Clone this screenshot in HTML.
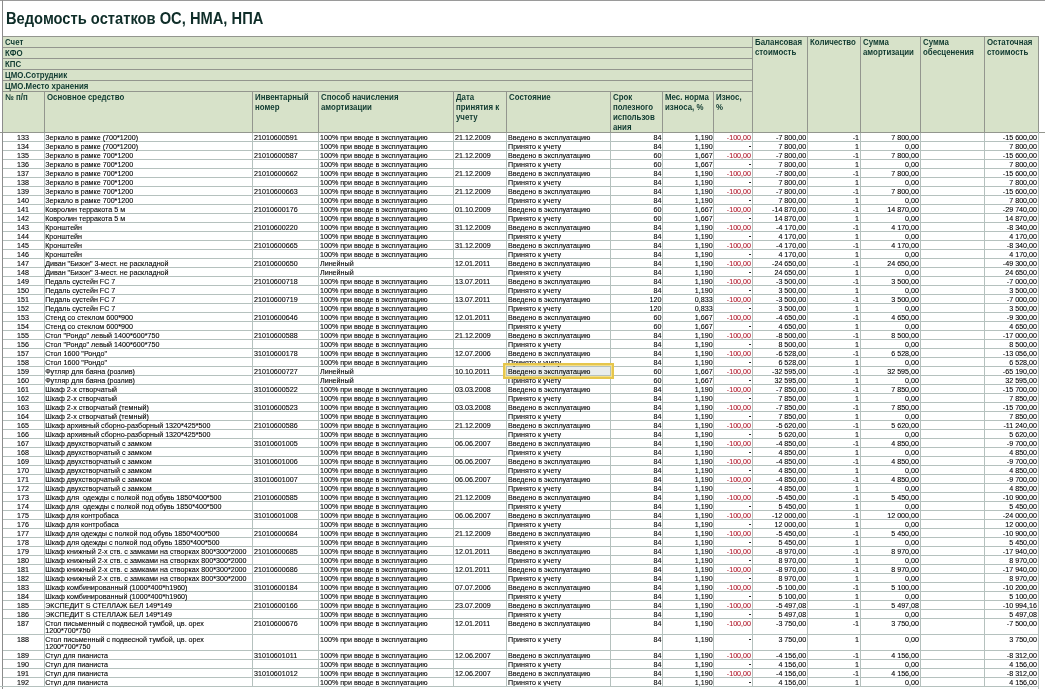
<!DOCTYPE html><html><head><meta charset="utf-8"><style>
html,body{margin:0;padding:0;background:#fff;}
body{will-change:transform;}
body{width:1045px;height:691px;overflow:hidden;position:relative;font-family:"Liberation Sans",sans-serif;}
div{position:absolute;}
.hl{height:1px;background:#93968e;}
.vl{width:1px;background:#93968e;}
.rl{height:1px;background:#b5c1be;}
.rv{width:1px;background:#b5c1be;}
.h{font-weight:bold;font-size:8.6px;line-height:10px;color:#0f3a30;white-space:nowrap;transform:scaleX(0.915);transform-origin:0 0;}
.d{font-size:7.15px;line-height:7px;color:#000;white-space:nowrap;-webkit-text-stroke:0.1px currentColor;}
.r{text-align:right;}
.c{text-align:center;}
.red{color:#b01a2c;}

</style></head><body>
<div class="hl" style="left:0;top:0;width:1045px;background:#9a9a9a"></div>
<div style="left:6px;top:8px;font-weight:bold;font-size:15px;line-height:20px;color:#0e2d28;white-space:nowrap;transform:scale(0.98,1.04);transform-origin:0 0">Ведомость остатков ОС, НМА, НПА</div>
<div style="left:2px;top:36px;width:1036px;height:96px;background:#d7e2c9"></div>
<div class="hl" style="left:2px;top:36px;width:1036px"></div>
<div class="hl" style="left:2px;top:47px;width:750px"></div>
<div class="hl" style="left:2px;top:58px;width:750px"></div>
<div class="hl" style="left:2px;top:69px;width:750px"></div>
<div class="hl" style="left:2px;top:80px;width:750px"></div>
<div class="hl" style="left:2px;top:91px;width:750px"></div>
<div class="hl" style="left:0;top:132px;width:1045px"></div>
<div class="vl" style="left:2px;top:36px;height:96px"></div>
<div class="vl" style="left:44px;top:91px;height:41px"></div>
<div class="vl" style="left:252px;top:91px;height:41px"></div>
<div class="vl" style="left:318px;top:91px;height:41px"></div>
<div class="vl" style="left:453px;top:91px;height:41px"></div>
<div class="vl" style="left:506px;top:91px;height:41px"></div>
<div class="vl" style="left:610px;top:91px;height:41px"></div>
<div class="vl" style="left:662px;top:91px;height:41px"></div>
<div class="vl" style="left:713px;top:91px;height:41px"></div>
<div class="vl" style="left:752px;top:36px;height:96px"></div>
<div class="vl" style="left:807px;top:36px;height:96px"></div>
<div class="vl" style="left:860px;top:36px;height:96px"></div>
<div class="vl" style="left:920px;top:36px;height:96px"></div>
<div class="vl" style="left:984px;top:36px;height:96px"></div>
<div class="vl" style="left:1038px;top:36px;height:96px"></div>
<div class="h" style="left:5px;top:37px">Счет</div>
<div class="h" style="left:5px;top:48px">КФО</div>
<div class="h" style="left:5px;top:59px">КПС</div>
<div class="h" style="left:5px;top:70px">ЦМО.Сотрудник</div>
<div class="h" style="left:5px;top:81px">ЦМО.Место хранения</div>
<div class="h" style="left:5px;top:92px">№ п/п</div>
<div class="h" style="left:47px;top:92px">Основное средство</div>
<div class="h" style="left:255px;top:92px">Инвентарный<br>номер</div>
<div class="h" style="left:321px;top:92px">Способ начисления<br>амортизации</div>
<div class="h" style="left:456px;top:92px">Дата<br>принятия к<br>учету</div>
<div class="h" style="left:509px;top:92px">Состояние</div>
<div class="h" style="left:613px;top:92px">Срок<br>полезного<br>использов<br>ания</div>
<div class="h" style="left:665px;top:92px">Мес. норма<br>износа, %</div>
<div class="h" style="left:716px;top:92px">Износ,<br>%</div>
<div class="h" style="left:755px;top:37px">Балансовая<br>стоимость</div>
<div class="h" style="left:810px;top:37px">Количество</div>
<div class="h" style="left:863px;top:37px">Сумма<br>амортизации</div>
<div class="h" style="left:923px;top:37px">Сумма<br>обесценения</div>
<div class="h" style="left:987px;top:37px">Остаточная<br>стоимость</div>
<div style="left:507px;top:367px;width:103px;height:8px;background:#e9eded"></div>
<div class="rl" style="left:2px;top:141px;width:1036px"></div>
<div class="d c" style="left:2px;width:42px;top:135px">133</div>
<div class="d " style="left:45.2px;top:135px">Зеркало в рамке (700*1200)</div>
<div class="d " style="left:254px;top:135px">21010600591</div>
<div class="d " style="left:320px;top:135px">100% при вводе в эксплуатацию</div>
<div class="d " style="left:455px;top:135px">21.12.2009</div>
<div class="d " style="left:508px;top:135px">Введено в эксплуатацию</div>
<div class="d r " style="right:383.6px;top:135px">84</div>
<div class="d r " style="right:332.4px;top:135px">1,190</div>
<div class="d r red" style="right:294.0px;top:135px">-100,00</div>
<div class="d r " style="right:238.8px;top:135px">-7 800,00</div>
<div class="d r " style="right:186.0px;top:135px">-1</div>
<div class="d r " style="right:126.0px;top:135px">7 800,00</div>
<div class="d r " style="right:8.0px;top:135px">-15 600,00</div>
<div class="rl" style="left:2px;top:150px;width:1036px"></div>
<div class="d c" style="left:2px;width:42px;top:144px">134</div>
<div class="d " style="left:45.2px;top:144px">Зеркало в рамке (700*1200)</div>
<div class="d " style="left:320px;top:144px">100% при вводе в эксплуатацию</div>
<div class="d " style="left:508px;top:144px">Принято к учету</div>
<div class="d r " style="right:383.6px;top:144px">84</div>
<div class="d r " style="right:332.4px;top:144px">1,190</div>
<div style="left:749px;top:146px;width:2px;height:1px;background:#262626"></div>
<div class="d r " style="right:238.8px;top:144px">7 800,00</div>
<div class="d r " style="right:186.0px;top:144px">1</div>
<div class="d r " style="right:126.0px;top:144px">0,00</div>
<div class="d r " style="right:8.0px;top:144px">7 800,00</div>
<div class="rl" style="left:2px;top:159px;width:1036px"></div>
<div class="d c" style="left:2px;width:42px;top:153px">135</div>
<div class="d " style="left:45.2px;top:153px">Зеркало в рамке 700*1200</div>
<div class="d " style="left:254px;top:153px">21010600587</div>
<div class="d " style="left:320px;top:153px">100% при вводе в эксплуатацию</div>
<div class="d " style="left:455px;top:153px">21.12.2009</div>
<div class="d " style="left:508px;top:153px">Введено в эксплуатацию</div>
<div class="d r " style="right:383.6px;top:153px">60</div>
<div class="d r " style="right:332.4px;top:153px">1,667</div>
<div class="d r red" style="right:294.0px;top:153px">-100,00</div>
<div class="d r " style="right:238.8px;top:153px">-7 800,00</div>
<div class="d r " style="right:186.0px;top:153px">-1</div>
<div class="d r " style="right:126.0px;top:153px">7 800,00</div>
<div class="d r " style="right:8.0px;top:153px">-15 600,00</div>
<div class="rl" style="left:2px;top:168px;width:1036px"></div>
<div class="d c" style="left:2px;width:42px;top:162px">136</div>
<div class="d " style="left:45.2px;top:162px">Зеркало в рамке 700*1200</div>
<div class="d " style="left:320px;top:162px">100% при вводе в эксплуатацию</div>
<div class="d " style="left:508px;top:162px">Принято к учету</div>
<div class="d r " style="right:383.6px;top:162px">60</div>
<div class="d r " style="right:332.4px;top:162px">1,667</div>
<div style="left:749px;top:164px;width:2px;height:1px;background:#262626"></div>
<div class="d r " style="right:238.8px;top:162px">7 800,00</div>
<div class="d r " style="right:186.0px;top:162px">1</div>
<div class="d r " style="right:126.0px;top:162px">0,00</div>
<div class="d r " style="right:8.0px;top:162px">7 800,00</div>
<div class="rl" style="left:2px;top:177px;width:1036px"></div>
<div class="d c" style="left:2px;width:42px;top:171px">137</div>
<div class="d " style="left:45.2px;top:171px">Зеркало в рамке 700*1200</div>
<div class="d " style="left:254px;top:171px">21010600662</div>
<div class="d " style="left:320px;top:171px">100% при вводе в эксплуатацию</div>
<div class="d " style="left:455px;top:171px">21.12.2009</div>
<div class="d " style="left:508px;top:171px">Введено в эксплуатацию</div>
<div class="d r " style="right:383.6px;top:171px">84</div>
<div class="d r " style="right:332.4px;top:171px">1,190</div>
<div class="d r red" style="right:294.0px;top:171px">-100,00</div>
<div class="d r " style="right:238.8px;top:171px">-7 800,00</div>
<div class="d r " style="right:186.0px;top:171px">-1</div>
<div class="d r " style="right:126.0px;top:171px">7 800,00</div>
<div class="d r " style="right:8.0px;top:171px">-15 600,00</div>
<div class="rl" style="left:2px;top:186px;width:1036px"></div>
<div class="d c" style="left:2px;width:42px;top:180px">138</div>
<div class="d " style="left:45.2px;top:180px">Зеркало в рамке 700*1200</div>
<div class="d " style="left:320px;top:180px">100% при вводе в эксплуатацию</div>
<div class="d " style="left:508px;top:180px">Принято к учету</div>
<div class="d r " style="right:383.6px;top:180px">84</div>
<div class="d r " style="right:332.4px;top:180px">1,190</div>
<div style="left:749px;top:182px;width:2px;height:1px;background:#262626"></div>
<div class="d r " style="right:238.8px;top:180px">7 800,00</div>
<div class="d r " style="right:186.0px;top:180px">1</div>
<div class="d r " style="right:126.0px;top:180px">0,00</div>
<div class="d r " style="right:8.0px;top:180px">7 800,00</div>
<div class="rl" style="left:2px;top:195px;width:1036px"></div>
<div class="d c" style="left:2px;width:42px;top:189px">139</div>
<div class="d " style="left:45.2px;top:189px">Зеркало в рамке 700*1200</div>
<div class="d " style="left:254px;top:189px">21010600663</div>
<div class="d " style="left:320px;top:189px">100% при вводе в эксплуатацию</div>
<div class="d " style="left:455px;top:189px">21.12.2009</div>
<div class="d " style="left:508px;top:189px">Введено в эксплуатацию</div>
<div class="d r " style="right:383.6px;top:189px">84</div>
<div class="d r " style="right:332.4px;top:189px">1,190</div>
<div class="d r red" style="right:294.0px;top:189px">-100,00</div>
<div class="d r " style="right:238.8px;top:189px">-7 800,00</div>
<div class="d r " style="right:186.0px;top:189px">-1</div>
<div class="d r " style="right:126.0px;top:189px">7 800,00</div>
<div class="d r " style="right:8.0px;top:189px">-15 600,00</div>
<div class="rl" style="left:2px;top:204px;width:1036px"></div>
<div class="d c" style="left:2px;width:42px;top:198px">140</div>
<div class="d " style="left:45.2px;top:198px">Зеркало в рамке 700*1200</div>
<div class="d " style="left:320px;top:198px">100% при вводе в эксплуатацию</div>
<div class="d " style="left:508px;top:198px">Принято к учету</div>
<div class="d r " style="right:383.6px;top:198px">84</div>
<div class="d r " style="right:332.4px;top:198px">1,190</div>
<div style="left:749px;top:200px;width:2px;height:1px;background:#262626"></div>
<div class="d r " style="right:238.8px;top:198px">7 800,00</div>
<div class="d r " style="right:186.0px;top:198px">1</div>
<div class="d r " style="right:126.0px;top:198px">0,00</div>
<div class="d r " style="right:8.0px;top:198px">7 800,00</div>
<div class="rl" style="left:2px;top:213px;width:1036px"></div>
<div class="d c" style="left:2px;width:42px;top:207px">141</div>
<div class="d " style="left:45.2px;top:207px">Ковролин терракота 5 м</div>
<div class="d " style="left:254px;top:207px">21010600176</div>
<div class="d " style="left:320px;top:207px">100% при вводе в эксплуатацию</div>
<div class="d " style="left:455px;top:207px">01.10.2009</div>
<div class="d " style="left:508px;top:207px">Введено в эксплуатацию</div>
<div class="d r " style="right:383.6px;top:207px">60</div>
<div class="d r " style="right:332.4px;top:207px">1,667</div>
<div class="d r red" style="right:294.0px;top:207px">-100,00</div>
<div class="d r " style="right:238.8px;top:207px">-14 870,00</div>
<div class="d r " style="right:186.0px;top:207px">-1</div>
<div class="d r " style="right:126.0px;top:207px">14 870,00</div>
<div class="d r " style="right:8.0px;top:207px">-29 740,00</div>
<div class="rl" style="left:2px;top:222px;width:1036px"></div>
<div class="d c" style="left:2px;width:42px;top:216px">142</div>
<div class="d " style="left:45.2px;top:216px">Ковролин терракота 5 м</div>
<div class="d " style="left:320px;top:216px">100% при вводе в эксплуатацию</div>
<div class="d " style="left:508px;top:216px">Принято к учету</div>
<div class="d r " style="right:383.6px;top:216px">60</div>
<div class="d r " style="right:332.4px;top:216px">1,667</div>
<div style="left:749px;top:218px;width:2px;height:1px;background:#262626"></div>
<div class="d r " style="right:238.8px;top:216px">14 870,00</div>
<div class="d r " style="right:186.0px;top:216px">1</div>
<div class="d r " style="right:126.0px;top:216px">0,00</div>
<div class="d r " style="right:8.0px;top:216px">14 870,00</div>
<div class="rl" style="left:2px;top:231px;width:1036px"></div>
<div class="d c" style="left:2px;width:42px;top:225px">143</div>
<div class="d " style="left:45.2px;top:225px">Кронштейн</div>
<div class="d " style="left:254px;top:225px">21010600220</div>
<div class="d " style="left:320px;top:225px">100% при вводе в эксплуатацию</div>
<div class="d " style="left:455px;top:225px">31.12.2009</div>
<div class="d " style="left:508px;top:225px">Введено в эксплуатацию</div>
<div class="d r " style="right:383.6px;top:225px">84</div>
<div class="d r " style="right:332.4px;top:225px">1,190</div>
<div class="d r red" style="right:294.0px;top:225px">-100,00</div>
<div class="d r " style="right:238.8px;top:225px">-4 170,00</div>
<div class="d r " style="right:186.0px;top:225px">-1</div>
<div class="d r " style="right:126.0px;top:225px">4 170,00</div>
<div class="d r " style="right:8.0px;top:225px">-8 340,00</div>
<div class="rl" style="left:2px;top:240px;width:1036px"></div>
<div class="d c" style="left:2px;width:42px;top:234px">144</div>
<div class="d " style="left:45.2px;top:234px">Кронштейн</div>
<div class="d " style="left:320px;top:234px">100% при вводе в эксплуатацию</div>
<div class="d " style="left:508px;top:234px">Принято к учету</div>
<div class="d r " style="right:383.6px;top:234px">84</div>
<div class="d r " style="right:332.4px;top:234px">1,190</div>
<div style="left:749px;top:236px;width:2px;height:1px;background:#262626"></div>
<div class="d r " style="right:238.8px;top:234px">4 170,00</div>
<div class="d r " style="right:186.0px;top:234px">1</div>
<div class="d r " style="right:126.0px;top:234px">0,00</div>
<div class="d r " style="right:8.0px;top:234px">4 170,00</div>
<div class="rl" style="left:2px;top:249px;width:1036px"></div>
<div class="d c" style="left:2px;width:42px;top:243px">145</div>
<div class="d " style="left:45.2px;top:243px">Кронштейн</div>
<div class="d " style="left:254px;top:243px">21010600665</div>
<div class="d " style="left:320px;top:243px">100% при вводе в эксплуатацию</div>
<div class="d " style="left:455px;top:243px">31.12.2009</div>
<div class="d " style="left:508px;top:243px">Введено в эксплуатацию</div>
<div class="d r " style="right:383.6px;top:243px">84</div>
<div class="d r " style="right:332.4px;top:243px">1,190</div>
<div class="d r red" style="right:294.0px;top:243px">-100,00</div>
<div class="d r " style="right:238.8px;top:243px">-4 170,00</div>
<div class="d r " style="right:186.0px;top:243px">-1</div>
<div class="d r " style="right:126.0px;top:243px">4 170,00</div>
<div class="d r " style="right:8.0px;top:243px">-8 340,00</div>
<div class="rl" style="left:2px;top:258px;width:1036px"></div>
<div class="d c" style="left:2px;width:42px;top:252px">146</div>
<div class="d " style="left:45.2px;top:252px">Кронштейн</div>
<div class="d " style="left:320px;top:252px">100% при вводе в эксплуатацию</div>
<div class="d " style="left:508px;top:252px">Принято к учету</div>
<div class="d r " style="right:383.6px;top:252px">84</div>
<div class="d r " style="right:332.4px;top:252px">1,190</div>
<div style="left:749px;top:254px;width:2px;height:1px;background:#262626"></div>
<div class="d r " style="right:238.8px;top:252px">4 170,00</div>
<div class="d r " style="right:186.0px;top:252px">1</div>
<div class="d r " style="right:126.0px;top:252px">0,00</div>
<div class="d r " style="right:8.0px;top:252px">4 170,00</div>
<div class="rl" style="left:2px;top:267px;width:1036px"></div>
<div class="d c" style="left:2px;width:42px;top:261px">147</div>
<div class="d " style="left:45.2px;top:261px">Диван "Бизон" 3-мест. не раскладной</div>
<div class="d " style="left:254px;top:261px">21010600650</div>
<div class="d " style="left:320px;top:261px">Линейный</div>
<div class="d " style="left:455px;top:261px">12.01.2011</div>
<div class="d " style="left:508px;top:261px">Введено в эксплуатацию</div>
<div class="d r " style="right:383.6px;top:261px">84</div>
<div class="d r " style="right:332.4px;top:261px">1,190</div>
<div class="d r red" style="right:294.0px;top:261px">-100,00</div>
<div class="d r " style="right:238.8px;top:261px">-24 650,00</div>
<div class="d r " style="right:186.0px;top:261px">-1</div>
<div class="d r " style="right:126.0px;top:261px">24 650,00</div>
<div class="d r " style="right:8.0px;top:261px">-49 300,00</div>
<div class="rl" style="left:2px;top:276px;width:1036px"></div>
<div class="d c" style="left:2px;width:42px;top:270px">148</div>
<div class="d " style="left:45.2px;top:270px">Диван "Бизон" 3-мест. не раскладной</div>
<div class="d " style="left:320px;top:270px">Линейный</div>
<div class="d " style="left:508px;top:270px">Принято к учету</div>
<div class="d r " style="right:383.6px;top:270px">84</div>
<div class="d r " style="right:332.4px;top:270px">1,190</div>
<div style="left:749px;top:272px;width:2px;height:1px;background:#262626"></div>
<div class="d r " style="right:238.8px;top:270px">24 650,00</div>
<div class="d r " style="right:186.0px;top:270px">1</div>
<div class="d r " style="right:126.0px;top:270px">0,00</div>
<div class="d r " style="right:8.0px;top:270px">24 650,00</div>
<div class="rl" style="left:2px;top:285px;width:1036px"></div>
<div class="d c" style="left:2px;width:42px;top:279px">149</div>
<div class="d " style="left:45.2px;top:279px">Педаль сустейн FC 7</div>
<div class="d " style="left:254px;top:279px">21010600718</div>
<div class="d " style="left:320px;top:279px">100% при вводе в эксплуатацию</div>
<div class="d " style="left:455px;top:279px">13.07.2011</div>
<div class="d " style="left:508px;top:279px">Введено в эксплуатацию</div>
<div class="d r " style="right:383.6px;top:279px">84</div>
<div class="d r " style="right:332.4px;top:279px">1,190</div>
<div class="d r red" style="right:294.0px;top:279px">-100,00</div>
<div class="d r " style="right:238.8px;top:279px">-3 500,00</div>
<div class="d r " style="right:186.0px;top:279px">-1</div>
<div class="d r " style="right:126.0px;top:279px">3 500,00</div>
<div class="d r " style="right:8.0px;top:279px">-7 000,00</div>
<div class="rl" style="left:2px;top:294px;width:1036px"></div>
<div class="d c" style="left:2px;width:42px;top:288px">150</div>
<div class="d " style="left:45.2px;top:288px">Педаль сустейн FC 7</div>
<div class="d " style="left:320px;top:288px">100% при вводе в эксплуатацию</div>
<div class="d " style="left:508px;top:288px">Принято к учету</div>
<div class="d r " style="right:383.6px;top:288px">84</div>
<div class="d r " style="right:332.4px;top:288px">1,190</div>
<div style="left:749px;top:290px;width:2px;height:1px;background:#262626"></div>
<div class="d r " style="right:238.8px;top:288px">3 500,00</div>
<div class="d r " style="right:186.0px;top:288px">1</div>
<div class="d r " style="right:126.0px;top:288px">0,00</div>
<div class="d r " style="right:8.0px;top:288px">3 500,00</div>
<div class="rl" style="left:2px;top:303px;width:1036px"></div>
<div class="d c" style="left:2px;width:42px;top:297px">151</div>
<div class="d " style="left:45.2px;top:297px">Педаль сустейн FC 7</div>
<div class="d " style="left:254px;top:297px">21010600719</div>
<div class="d " style="left:320px;top:297px">100% при вводе в эксплуатацию</div>
<div class="d " style="left:455px;top:297px">13.07.2011</div>
<div class="d " style="left:508px;top:297px">Введено в эксплуатацию</div>
<div class="d r " style="right:383.6px;top:297px">120</div>
<div class="d r " style="right:332.4px;top:297px">0,833</div>
<div class="d r red" style="right:294.0px;top:297px">-100,00</div>
<div class="d r " style="right:238.8px;top:297px">-3 500,00</div>
<div class="d r " style="right:186.0px;top:297px">-1</div>
<div class="d r " style="right:126.0px;top:297px">3 500,00</div>
<div class="d r " style="right:8.0px;top:297px">-7 000,00</div>
<div class="rl" style="left:2px;top:312px;width:1036px"></div>
<div class="d c" style="left:2px;width:42px;top:306px">152</div>
<div class="d " style="left:45.2px;top:306px">Педаль сустейн FC 7</div>
<div class="d " style="left:320px;top:306px">100% при вводе в эксплуатацию</div>
<div class="d " style="left:508px;top:306px">Принято к учету</div>
<div class="d r " style="right:383.6px;top:306px">120</div>
<div class="d r " style="right:332.4px;top:306px">0,833</div>
<div style="left:749px;top:308px;width:2px;height:1px;background:#262626"></div>
<div class="d r " style="right:238.8px;top:306px">3 500,00</div>
<div class="d r " style="right:186.0px;top:306px">1</div>
<div class="d r " style="right:126.0px;top:306px">0,00</div>
<div class="d r " style="right:8.0px;top:306px">3 500,00</div>
<div class="rl" style="left:2px;top:321px;width:1036px"></div>
<div class="d c" style="left:2px;width:42px;top:315px">153</div>
<div class="d " style="left:45.2px;top:315px">Стенд со стеклом 600*900</div>
<div class="d " style="left:254px;top:315px">21010600646</div>
<div class="d " style="left:320px;top:315px">100% при вводе в эксплуатацию</div>
<div class="d " style="left:455px;top:315px">12.01.2011</div>
<div class="d " style="left:508px;top:315px">Введено в эксплуатацию</div>
<div class="d r " style="right:383.6px;top:315px">60</div>
<div class="d r " style="right:332.4px;top:315px">1,667</div>
<div class="d r red" style="right:294.0px;top:315px">-100,00</div>
<div class="d r " style="right:238.8px;top:315px">-4 650,00</div>
<div class="d r " style="right:186.0px;top:315px">-1</div>
<div class="d r " style="right:126.0px;top:315px">4 650,00</div>
<div class="d r " style="right:8.0px;top:315px">-9 300,00</div>
<div class="rl" style="left:2px;top:330px;width:1036px"></div>
<div class="d c" style="left:2px;width:42px;top:324px">154</div>
<div class="d " style="left:45.2px;top:324px">Стенд со стеклом 600*900</div>
<div class="d " style="left:320px;top:324px">100% при вводе в эксплуатацию</div>
<div class="d " style="left:508px;top:324px">Принято к учету</div>
<div class="d r " style="right:383.6px;top:324px">60</div>
<div class="d r " style="right:332.4px;top:324px">1,667</div>
<div style="left:749px;top:326px;width:2px;height:1px;background:#262626"></div>
<div class="d r " style="right:238.8px;top:324px">4 650,00</div>
<div class="d r " style="right:186.0px;top:324px">1</div>
<div class="d r " style="right:126.0px;top:324px">0,00</div>
<div class="d r " style="right:8.0px;top:324px">4 650,00</div>
<div class="rl" style="left:2px;top:339px;width:1036px"></div>
<div class="d c" style="left:2px;width:42px;top:333px">155</div>
<div class="d " style="left:45.2px;top:333px">Стол "Рондо" левый 1400*600*750</div>
<div class="d " style="left:254px;top:333px">21010600588</div>
<div class="d " style="left:320px;top:333px">100% при вводе в эксплуатацию</div>
<div class="d " style="left:455px;top:333px">21.12.2009</div>
<div class="d " style="left:508px;top:333px">Введено в эксплуатацию</div>
<div class="d r " style="right:383.6px;top:333px">84</div>
<div class="d r " style="right:332.4px;top:333px">1,190</div>
<div class="d r red" style="right:294.0px;top:333px">-100,00</div>
<div class="d r " style="right:238.8px;top:333px">-8 500,00</div>
<div class="d r " style="right:186.0px;top:333px">-1</div>
<div class="d r " style="right:126.0px;top:333px">8 500,00</div>
<div class="d r " style="right:8.0px;top:333px">-17 000,00</div>
<div class="rl" style="left:2px;top:348px;width:1036px"></div>
<div class="d c" style="left:2px;width:42px;top:342px">156</div>
<div class="d " style="left:45.2px;top:342px">Стол "Рондо" левый 1400*600*750</div>
<div class="d " style="left:320px;top:342px">100% при вводе в эксплуатацию</div>
<div class="d " style="left:508px;top:342px">Принято к учету</div>
<div class="d r " style="right:383.6px;top:342px">84</div>
<div class="d r " style="right:332.4px;top:342px">1,190</div>
<div style="left:749px;top:344px;width:2px;height:1px;background:#262626"></div>
<div class="d r " style="right:238.8px;top:342px">8 500,00</div>
<div class="d r " style="right:186.0px;top:342px">1</div>
<div class="d r " style="right:126.0px;top:342px">0,00</div>
<div class="d r " style="right:8.0px;top:342px">8 500,00</div>
<div class="rl" style="left:2px;top:357px;width:1036px"></div>
<div class="d c" style="left:2px;width:42px;top:351px">157</div>
<div class="d " style="left:45.2px;top:351px">Стол 1600 "Рондо"</div>
<div class="d " style="left:254px;top:351px">31010600178</div>
<div class="d " style="left:320px;top:351px">100% при вводе в эксплуатацию</div>
<div class="d " style="left:455px;top:351px">12.07.2006</div>
<div class="d " style="left:508px;top:351px">Введено в эксплуатацию</div>
<div class="d r " style="right:383.6px;top:351px">84</div>
<div class="d r " style="right:332.4px;top:351px">1,190</div>
<div class="d r red" style="right:294.0px;top:351px">-100,00</div>
<div class="d r " style="right:238.8px;top:351px">-6 528,00</div>
<div class="d r " style="right:186.0px;top:351px">-1</div>
<div class="d r " style="right:126.0px;top:351px">6 528,00</div>
<div class="d r " style="right:8.0px;top:351px">-13 056,00</div>
<div class="rl" style="left:2px;top:366px;width:1036px"></div>
<div class="d c" style="left:2px;width:42px;top:360px">158</div>
<div class="d " style="left:45.2px;top:360px">Стол 1600 "Рондо"</div>
<div class="d " style="left:320px;top:360px">100% при вводе в эксплуатацию</div>
<div class="d " style="left:508px;top:360px">Принято к учету</div>
<div class="d r " style="right:383.6px;top:360px">84</div>
<div class="d r " style="right:332.4px;top:360px">1,190</div>
<div style="left:749px;top:362px;width:2px;height:1px;background:#262626"></div>
<div class="d r " style="right:238.8px;top:360px">6 528,00</div>
<div class="d r " style="right:186.0px;top:360px">1</div>
<div class="d r " style="right:126.0px;top:360px">0,00</div>
<div class="d r " style="right:8.0px;top:360px">6 528,00</div>
<div class="rl" style="left:2px;top:375px;width:1036px"></div>
<div class="d c" style="left:2px;width:42px;top:369px">159</div>
<div class="d " style="left:45.2px;top:369px">Футляр для баяна (розлив)</div>
<div class="d " style="left:254px;top:369px">21010600727</div>
<div class="d " style="left:320px;top:369px">Линейный</div>
<div class="d " style="left:455px;top:369px">10.10.2011</div>
<div class="d " style="left:508px;top:369px">Введено в эксплуатацию</div>
<div class="d r " style="right:383.6px;top:369px">60</div>
<div class="d r " style="right:332.4px;top:369px">1,667</div>
<div class="d r red" style="right:294.0px;top:369px">-100,00</div>
<div class="d r " style="right:238.8px;top:369px">-32 595,00</div>
<div class="d r " style="right:186.0px;top:369px">-1</div>
<div class="d r " style="right:126.0px;top:369px">32 595,00</div>
<div class="d r " style="right:8.0px;top:369px">-65 190,00</div>
<div class="rl" style="left:2px;top:384px;width:1036px"></div>
<div class="d c" style="left:2px;width:42px;top:378px">160</div>
<div class="d " style="left:45.2px;top:378px">Футляр для баяна (розлив)</div>
<div class="d " style="left:320px;top:378px">Линейный</div>
<div class="d " style="left:508px;top:378px">Принято к учету</div>
<div class="d r " style="right:383.6px;top:378px">60</div>
<div class="d r " style="right:332.4px;top:378px">1,667</div>
<div style="left:749px;top:380px;width:2px;height:1px;background:#262626"></div>
<div class="d r " style="right:238.8px;top:378px">32 595,00</div>
<div class="d r " style="right:186.0px;top:378px">1</div>
<div class="d r " style="right:126.0px;top:378px">0,00</div>
<div class="d r " style="right:8.0px;top:378px">32 595,00</div>
<div class="rl" style="left:2px;top:393px;width:1036px"></div>
<div class="d c" style="left:2px;width:42px;top:387px">161</div>
<div class="d " style="left:45.2px;top:387px">Шкаф 2-х створчатый</div>
<div class="d " style="left:254px;top:387px">31010600522</div>
<div class="d " style="left:320px;top:387px">100% при вводе в эксплуатацию</div>
<div class="d " style="left:455px;top:387px">03.03.2008</div>
<div class="d " style="left:508px;top:387px">Введено в эксплуатацию</div>
<div class="d r " style="right:383.6px;top:387px">84</div>
<div class="d r " style="right:332.4px;top:387px">1,190</div>
<div class="d r red" style="right:294.0px;top:387px">-100,00</div>
<div class="d r " style="right:238.8px;top:387px">-7 850,00</div>
<div class="d r " style="right:186.0px;top:387px">-1</div>
<div class="d r " style="right:126.0px;top:387px">7 850,00</div>
<div class="d r " style="right:8.0px;top:387px">-15 700,00</div>
<div class="rl" style="left:2px;top:402px;width:1036px"></div>
<div class="d c" style="left:2px;width:42px;top:396px">162</div>
<div class="d " style="left:45.2px;top:396px">Шкаф 2-х створчатый</div>
<div class="d " style="left:320px;top:396px">100% при вводе в эксплуатацию</div>
<div class="d " style="left:508px;top:396px">Принято к учету</div>
<div class="d r " style="right:383.6px;top:396px">84</div>
<div class="d r " style="right:332.4px;top:396px">1,190</div>
<div style="left:749px;top:398px;width:2px;height:1px;background:#262626"></div>
<div class="d r " style="right:238.8px;top:396px">7 850,00</div>
<div class="d r " style="right:186.0px;top:396px">1</div>
<div class="d r " style="right:126.0px;top:396px">0,00</div>
<div class="d r " style="right:8.0px;top:396px">7 850,00</div>
<div class="rl" style="left:2px;top:411px;width:1036px"></div>
<div class="d c" style="left:2px;width:42px;top:405px">163</div>
<div class="d " style="left:45.2px;top:405px">Шкаф 2-х створчатый (темный)</div>
<div class="d " style="left:254px;top:405px">31010600523</div>
<div class="d " style="left:320px;top:405px">100% при вводе в эксплуатацию</div>
<div class="d " style="left:455px;top:405px">03.03.2008</div>
<div class="d " style="left:508px;top:405px">Введено в эксплуатацию</div>
<div class="d r " style="right:383.6px;top:405px">84</div>
<div class="d r " style="right:332.4px;top:405px">1,190</div>
<div class="d r red" style="right:294.0px;top:405px">-100,00</div>
<div class="d r " style="right:238.8px;top:405px">-7 850,00</div>
<div class="d r " style="right:186.0px;top:405px">-1</div>
<div class="d r " style="right:126.0px;top:405px">7 850,00</div>
<div class="d r " style="right:8.0px;top:405px">-15 700,00</div>
<div class="rl" style="left:2px;top:420px;width:1036px"></div>
<div class="d c" style="left:2px;width:42px;top:414px">164</div>
<div class="d " style="left:45.2px;top:414px">Шкаф 2-х створчатый (темный)</div>
<div class="d " style="left:320px;top:414px">100% при вводе в эксплуатацию</div>
<div class="d " style="left:508px;top:414px">Принято к учету</div>
<div class="d r " style="right:383.6px;top:414px">84</div>
<div class="d r " style="right:332.4px;top:414px">1,190</div>
<div style="left:749px;top:416px;width:2px;height:1px;background:#262626"></div>
<div class="d r " style="right:238.8px;top:414px">7 850,00</div>
<div class="d r " style="right:186.0px;top:414px">1</div>
<div class="d r " style="right:126.0px;top:414px">0,00</div>
<div class="d r " style="right:8.0px;top:414px">7 850,00</div>
<div class="rl" style="left:2px;top:429px;width:1036px"></div>
<div class="d c" style="left:2px;width:42px;top:423px">165</div>
<div class="d " style="left:45.2px;top:423px">Шкаф архивный сборно-разборный 1320*425*500</div>
<div class="d " style="left:254px;top:423px">21010600586</div>
<div class="d " style="left:320px;top:423px">100% при вводе в эксплуатацию</div>
<div class="d " style="left:455px;top:423px">21.12.2009</div>
<div class="d " style="left:508px;top:423px">Введено в эксплуатацию</div>
<div class="d r " style="right:383.6px;top:423px">84</div>
<div class="d r " style="right:332.4px;top:423px">1,190</div>
<div class="d r red" style="right:294.0px;top:423px">-100,00</div>
<div class="d r " style="right:238.8px;top:423px">-5 620,00</div>
<div class="d r " style="right:186.0px;top:423px">-1</div>
<div class="d r " style="right:126.0px;top:423px">5 620,00</div>
<div class="d r " style="right:8.0px;top:423px">-11 240,00</div>
<div class="rl" style="left:2px;top:438px;width:1036px"></div>
<div class="d c" style="left:2px;width:42px;top:432px">166</div>
<div class="d " style="left:45.2px;top:432px">Шкаф архивный сборно-разборный 1320*425*500</div>
<div class="d " style="left:320px;top:432px">100% при вводе в эксплуатацию</div>
<div class="d " style="left:508px;top:432px">Принято к учету</div>
<div class="d r " style="right:383.6px;top:432px">84</div>
<div class="d r " style="right:332.4px;top:432px">1,190</div>
<div style="left:749px;top:434px;width:2px;height:1px;background:#262626"></div>
<div class="d r " style="right:238.8px;top:432px">5 620,00</div>
<div class="d r " style="right:186.0px;top:432px">1</div>
<div class="d r " style="right:126.0px;top:432px">0,00</div>
<div class="d r " style="right:8.0px;top:432px">5 620,00</div>
<div class="rl" style="left:2px;top:447px;width:1036px"></div>
<div class="d c" style="left:2px;width:42px;top:441px">167</div>
<div class="d " style="left:45.2px;top:441px">Шкаф двухстворчатый с замком</div>
<div class="d " style="left:254px;top:441px">31010601005</div>
<div class="d " style="left:320px;top:441px">100% при вводе в эксплуатацию</div>
<div class="d " style="left:455px;top:441px">06.06.2007</div>
<div class="d " style="left:508px;top:441px">Введено в эксплуатацию</div>
<div class="d r " style="right:383.6px;top:441px">84</div>
<div class="d r " style="right:332.4px;top:441px">1,190</div>
<div class="d r red" style="right:294.0px;top:441px">-100,00</div>
<div class="d r " style="right:238.8px;top:441px">-4 850,00</div>
<div class="d r " style="right:186.0px;top:441px">-1</div>
<div class="d r " style="right:126.0px;top:441px">4 850,00</div>
<div class="d r " style="right:8.0px;top:441px">-9 700,00</div>
<div class="rl" style="left:2px;top:456px;width:1036px"></div>
<div class="d c" style="left:2px;width:42px;top:450px">168</div>
<div class="d " style="left:45.2px;top:450px">Шкаф двухстворчатый с замком</div>
<div class="d " style="left:320px;top:450px">100% при вводе в эксплуатацию</div>
<div class="d " style="left:508px;top:450px">Принято к учету</div>
<div class="d r " style="right:383.6px;top:450px">84</div>
<div class="d r " style="right:332.4px;top:450px">1,190</div>
<div style="left:749px;top:452px;width:2px;height:1px;background:#262626"></div>
<div class="d r " style="right:238.8px;top:450px">4 850,00</div>
<div class="d r " style="right:186.0px;top:450px">1</div>
<div class="d r " style="right:126.0px;top:450px">0,00</div>
<div class="d r " style="right:8.0px;top:450px">4 850,00</div>
<div class="rl" style="left:2px;top:465px;width:1036px"></div>
<div class="d c" style="left:2px;width:42px;top:459px">169</div>
<div class="d " style="left:45.2px;top:459px">Шкаф двухстворчатый с замком</div>
<div class="d " style="left:254px;top:459px">31010601006</div>
<div class="d " style="left:320px;top:459px">100% при вводе в эксплуатацию</div>
<div class="d " style="left:455px;top:459px">06.06.2007</div>
<div class="d " style="left:508px;top:459px">Введено в эксплуатацию</div>
<div class="d r " style="right:383.6px;top:459px">84</div>
<div class="d r " style="right:332.4px;top:459px">1,190</div>
<div class="d r red" style="right:294.0px;top:459px">-100,00</div>
<div class="d r " style="right:238.8px;top:459px">-4 850,00</div>
<div class="d r " style="right:186.0px;top:459px">-1</div>
<div class="d r " style="right:126.0px;top:459px">4 850,00</div>
<div class="d r " style="right:8.0px;top:459px">-9 700,00</div>
<div class="rl" style="left:2px;top:474px;width:1036px"></div>
<div class="d c" style="left:2px;width:42px;top:468px">170</div>
<div class="d " style="left:45.2px;top:468px">Шкаф двухстворчатый с замком</div>
<div class="d " style="left:320px;top:468px">100% при вводе в эксплуатацию</div>
<div class="d " style="left:508px;top:468px">Принято к учету</div>
<div class="d r " style="right:383.6px;top:468px">84</div>
<div class="d r " style="right:332.4px;top:468px">1,190</div>
<div style="left:749px;top:470px;width:2px;height:1px;background:#262626"></div>
<div class="d r " style="right:238.8px;top:468px">4 850,00</div>
<div class="d r " style="right:186.0px;top:468px">1</div>
<div class="d r " style="right:126.0px;top:468px">0,00</div>
<div class="d r " style="right:8.0px;top:468px">4 850,00</div>
<div class="rl" style="left:2px;top:483px;width:1036px"></div>
<div class="d c" style="left:2px;width:42px;top:477px">171</div>
<div class="d " style="left:45.2px;top:477px">Шкаф двухстворчатый с замком</div>
<div class="d " style="left:254px;top:477px">31010601007</div>
<div class="d " style="left:320px;top:477px">100% при вводе в эксплуатацию</div>
<div class="d " style="left:455px;top:477px">06.06.2007</div>
<div class="d " style="left:508px;top:477px">Введено в эксплуатацию</div>
<div class="d r " style="right:383.6px;top:477px">84</div>
<div class="d r " style="right:332.4px;top:477px">1,190</div>
<div class="d r red" style="right:294.0px;top:477px">-100,00</div>
<div class="d r " style="right:238.8px;top:477px">-4 850,00</div>
<div class="d r " style="right:186.0px;top:477px">-1</div>
<div class="d r " style="right:126.0px;top:477px">4 850,00</div>
<div class="d r " style="right:8.0px;top:477px">-9 700,00</div>
<div class="rl" style="left:2px;top:492px;width:1036px"></div>
<div class="d c" style="left:2px;width:42px;top:486px">172</div>
<div class="d " style="left:45.2px;top:486px">Шкаф двухстворчатый с замком</div>
<div class="d " style="left:320px;top:486px">100% при вводе в эксплуатацию</div>
<div class="d " style="left:508px;top:486px">Принято к учету</div>
<div class="d r " style="right:383.6px;top:486px">84</div>
<div class="d r " style="right:332.4px;top:486px">1,190</div>
<div style="left:749px;top:488px;width:2px;height:1px;background:#262626"></div>
<div class="d r " style="right:238.8px;top:486px">4 850,00</div>
<div class="d r " style="right:186.0px;top:486px">1</div>
<div class="d r " style="right:126.0px;top:486px">0,00</div>
<div class="d r " style="right:8.0px;top:486px">4 850,00</div>
<div class="rl" style="left:2px;top:501px;width:1036px"></div>
<div class="d c" style="left:2px;width:42px;top:495px">173</div>
<div class="d " style="left:45.2px;top:495px">Шкаф для &nbsp;одежды с полкой под обувь 1850*400*500</div>
<div class="d " style="left:254px;top:495px">21010600585</div>
<div class="d " style="left:320px;top:495px">100% при вводе в эксплуатацию</div>
<div class="d " style="left:455px;top:495px">21.12.2009</div>
<div class="d " style="left:508px;top:495px">Введено в эксплуатацию</div>
<div class="d r " style="right:383.6px;top:495px">84</div>
<div class="d r " style="right:332.4px;top:495px">1,190</div>
<div class="d r red" style="right:294.0px;top:495px">-100,00</div>
<div class="d r " style="right:238.8px;top:495px">-5 450,00</div>
<div class="d r " style="right:186.0px;top:495px">-1</div>
<div class="d r " style="right:126.0px;top:495px">5 450,00</div>
<div class="d r " style="right:8.0px;top:495px">-10 900,00</div>
<div class="rl" style="left:2px;top:510px;width:1036px"></div>
<div class="d c" style="left:2px;width:42px;top:504px">174</div>
<div class="d " style="left:45.2px;top:504px">Шкаф для &nbsp;одежды с полкой под обувь 1850*400*500</div>
<div class="d " style="left:320px;top:504px">100% при вводе в эксплуатацию</div>
<div class="d " style="left:508px;top:504px">Принято к учету</div>
<div class="d r " style="right:383.6px;top:504px">84</div>
<div class="d r " style="right:332.4px;top:504px">1,190</div>
<div style="left:749px;top:506px;width:2px;height:1px;background:#262626"></div>
<div class="d r " style="right:238.8px;top:504px">5 450,00</div>
<div class="d r " style="right:186.0px;top:504px">1</div>
<div class="d r " style="right:126.0px;top:504px">0,00</div>
<div class="d r " style="right:8.0px;top:504px">5 450,00</div>
<div class="rl" style="left:2px;top:519px;width:1036px"></div>
<div class="d c" style="left:2px;width:42px;top:513px">175</div>
<div class="d " style="left:45.2px;top:513px">Шкаф для контробаса</div>
<div class="d " style="left:254px;top:513px">31010601008</div>
<div class="d " style="left:320px;top:513px">100% при вводе в эксплуатацию</div>
<div class="d " style="left:455px;top:513px">06.06.2007</div>
<div class="d " style="left:508px;top:513px">Введено в эксплуатацию</div>
<div class="d r " style="right:383.6px;top:513px">84</div>
<div class="d r " style="right:332.4px;top:513px">1,190</div>
<div class="d r red" style="right:294.0px;top:513px">-100,00</div>
<div class="d r " style="right:238.8px;top:513px">-12 000,00</div>
<div class="d r " style="right:186.0px;top:513px">-1</div>
<div class="d r " style="right:126.0px;top:513px">12 000,00</div>
<div class="d r " style="right:8.0px;top:513px">-24 000,00</div>
<div class="rl" style="left:2px;top:528px;width:1036px"></div>
<div class="d c" style="left:2px;width:42px;top:522px">176</div>
<div class="d " style="left:45.2px;top:522px">Шкаф для контробаса</div>
<div class="d " style="left:320px;top:522px">100% при вводе в эксплуатацию</div>
<div class="d " style="left:508px;top:522px">Принято к учету</div>
<div class="d r " style="right:383.6px;top:522px">84</div>
<div class="d r " style="right:332.4px;top:522px">1,190</div>
<div style="left:749px;top:524px;width:2px;height:1px;background:#262626"></div>
<div class="d r " style="right:238.8px;top:522px">12 000,00</div>
<div class="d r " style="right:186.0px;top:522px">1</div>
<div class="d r " style="right:126.0px;top:522px">0,00</div>
<div class="d r " style="right:8.0px;top:522px">12 000,00</div>
<div class="rl" style="left:2px;top:537px;width:1036px"></div>
<div class="d c" style="left:2px;width:42px;top:531px">177</div>
<div class="d " style="left:45.2px;top:531px">Шкаф для одежды с полкой под обувь 1850*400*500</div>
<div class="d " style="left:254px;top:531px">21010600684</div>
<div class="d " style="left:320px;top:531px">100% при вводе в эксплуатацию</div>
<div class="d " style="left:455px;top:531px">21.12.2009</div>
<div class="d " style="left:508px;top:531px">Введено в эксплуатацию</div>
<div class="d r " style="right:383.6px;top:531px">84</div>
<div class="d r " style="right:332.4px;top:531px">1,190</div>
<div class="d r red" style="right:294.0px;top:531px">-100,00</div>
<div class="d r " style="right:238.8px;top:531px">-5 450,00</div>
<div class="d r " style="right:186.0px;top:531px">-1</div>
<div class="d r " style="right:126.0px;top:531px">5 450,00</div>
<div class="d r " style="right:8.0px;top:531px">-10 900,00</div>
<div class="rl" style="left:2px;top:546px;width:1036px"></div>
<div class="d c" style="left:2px;width:42px;top:540px">178</div>
<div class="d " style="left:45.2px;top:540px">Шкаф для одежды с полкой под обувь 1850*400*500</div>
<div class="d " style="left:320px;top:540px">100% при вводе в эксплуатацию</div>
<div class="d " style="left:508px;top:540px">Принято к учету</div>
<div class="d r " style="right:383.6px;top:540px">84</div>
<div class="d r " style="right:332.4px;top:540px">1,190</div>
<div style="left:749px;top:542px;width:2px;height:1px;background:#262626"></div>
<div class="d r " style="right:238.8px;top:540px">5 450,00</div>
<div class="d r " style="right:186.0px;top:540px">1</div>
<div class="d r " style="right:126.0px;top:540px">0,00</div>
<div class="d r " style="right:8.0px;top:540px">5 450,00</div>
<div class="rl" style="left:2px;top:555px;width:1036px"></div>
<div class="d c" style="left:2px;width:42px;top:549px">179</div>
<div class="d " style="left:45.2px;top:549px">Шкаф книжный 2-х ств. с замками на створках 800*300*2000</div>
<div class="d " style="left:254px;top:549px">21010600685</div>
<div class="d " style="left:320px;top:549px">100% при вводе в эксплуатацию</div>
<div class="d " style="left:455px;top:549px">12.01.2011</div>
<div class="d " style="left:508px;top:549px">Введено в эксплуатацию</div>
<div class="d r " style="right:383.6px;top:549px">84</div>
<div class="d r " style="right:332.4px;top:549px">1,190</div>
<div class="d r red" style="right:294.0px;top:549px">-100,00</div>
<div class="d r " style="right:238.8px;top:549px">-8 970,00</div>
<div class="d r " style="right:186.0px;top:549px">-1</div>
<div class="d r " style="right:126.0px;top:549px">8 970,00</div>
<div class="d r " style="right:8.0px;top:549px">-17 940,00</div>
<div class="rl" style="left:2px;top:564px;width:1036px"></div>
<div class="d c" style="left:2px;width:42px;top:558px">180</div>
<div class="d " style="left:45.2px;top:558px">Шкаф книжный 2-х ств. с замками на створках 800*300*2000</div>
<div class="d " style="left:320px;top:558px">100% при вводе в эксплуатацию</div>
<div class="d " style="left:508px;top:558px">Принято к учету</div>
<div class="d r " style="right:383.6px;top:558px">84</div>
<div class="d r " style="right:332.4px;top:558px">1,190</div>
<div style="left:749px;top:560px;width:2px;height:1px;background:#262626"></div>
<div class="d r " style="right:238.8px;top:558px">8 970,00</div>
<div class="d r " style="right:186.0px;top:558px">1</div>
<div class="d r " style="right:126.0px;top:558px">0,00</div>
<div class="d r " style="right:8.0px;top:558px">8 970,00</div>
<div class="rl" style="left:2px;top:573px;width:1036px"></div>
<div class="d c" style="left:2px;width:42px;top:567px">181</div>
<div class="d " style="left:45.2px;top:567px">Шкаф книжный 2-х ств. с замками на створках 800*300*2000</div>
<div class="d " style="left:254px;top:567px">21010600686</div>
<div class="d " style="left:320px;top:567px">100% при вводе в эксплуатацию</div>
<div class="d " style="left:455px;top:567px">12.01.2011</div>
<div class="d " style="left:508px;top:567px">Введено в эксплуатацию</div>
<div class="d r " style="right:383.6px;top:567px">84</div>
<div class="d r " style="right:332.4px;top:567px">1,190</div>
<div class="d r red" style="right:294.0px;top:567px">-100,00</div>
<div class="d r " style="right:238.8px;top:567px">-8 970,00</div>
<div class="d r " style="right:186.0px;top:567px">-1</div>
<div class="d r " style="right:126.0px;top:567px">8 970,00</div>
<div class="d r " style="right:8.0px;top:567px">-17 940,00</div>
<div class="rl" style="left:2px;top:582px;width:1036px"></div>
<div class="d c" style="left:2px;width:42px;top:576px">182</div>
<div class="d " style="left:45.2px;top:576px">Шкаф книжный 2-х ств. с замками на створках 800*300*2000</div>
<div class="d " style="left:320px;top:576px">100% при вводе в эксплуатацию</div>
<div class="d " style="left:508px;top:576px">Принято к учету</div>
<div class="d r " style="right:383.6px;top:576px">84</div>
<div class="d r " style="right:332.4px;top:576px">1,190</div>
<div style="left:749px;top:578px;width:2px;height:1px;background:#262626"></div>
<div class="d r " style="right:238.8px;top:576px">8 970,00</div>
<div class="d r " style="right:186.0px;top:576px">1</div>
<div class="d r " style="right:126.0px;top:576px">0,00</div>
<div class="d r " style="right:8.0px;top:576px">8 970,00</div>
<div class="rl" style="left:2px;top:591px;width:1036px"></div>
<div class="d c" style="left:2px;width:42px;top:585px">183</div>
<div class="d " style="left:45.2px;top:585px">Шкаф комбинированный (1000*400*h1960)</div>
<div class="d " style="left:254px;top:585px">31010600184</div>
<div class="d " style="left:320px;top:585px">100% при вводе в эксплуатацию</div>
<div class="d " style="left:455px;top:585px">07.07.2006</div>
<div class="d " style="left:508px;top:585px">Введено в эксплуатацию</div>
<div class="d r " style="right:383.6px;top:585px">84</div>
<div class="d r " style="right:332.4px;top:585px">1,190</div>
<div class="d r red" style="right:294.0px;top:585px">-100,00</div>
<div class="d r " style="right:238.8px;top:585px">-5 100,00</div>
<div class="d r " style="right:186.0px;top:585px">-1</div>
<div class="d r " style="right:126.0px;top:585px">5 100,00</div>
<div class="d r " style="right:8.0px;top:585px">-10 200,00</div>
<div class="rl" style="left:2px;top:600px;width:1036px"></div>
<div class="d c" style="left:2px;width:42px;top:594px">184</div>
<div class="d " style="left:45.2px;top:594px">Шкаф комбинированный (1000*400*h1960)</div>
<div class="d " style="left:320px;top:594px">100% при вводе в эксплуатацию</div>
<div class="d " style="left:508px;top:594px">Принято к учету</div>
<div class="d r " style="right:383.6px;top:594px">84</div>
<div class="d r " style="right:332.4px;top:594px">1,190</div>
<div style="left:749px;top:596px;width:2px;height:1px;background:#262626"></div>
<div class="d r " style="right:238.8px;top:594px">5 100,00</div>
<div class="d r " style="right:186.0px;top:594px">1</div>
<div class="d r " style="right:126.0px;top:594px">0,00</div>
<div class="d r " style="right:8.0px;top:594px">5 100,00</div>
<div class="rl" style="left:2px;top:609px;width:1036px"></div>
<div class="d c" style="left:2px;width:42px;top:603px">185</div>
<div class="d " style="left:45.2px;top:603px">ЭКСПЕДИТ S СТЕЛЛАЖ БЕЛ 149*149</div>
<div class="d " style="left:254px;top:603px">21010600166</div>
<div class="d " style="left:320px;top:603px">100% при вводе в эксплуатацию</div>
<div class="d " style="left:455px;top:603px">23.07.2009</div>
<div class="d " style="left:508px;top:603px">Введено в эксплуатацию</div>
<div class="d r " style="right:383.6px;top:603px">84</div>
<div class="d r " style="right:332.4px;top:603px">1,190</div>
<div class="d r red" style="right:294.0px;top:603px">-100,00</div>
<div class="d r " style="right:238.8px;top:603px">-5 497,08</div>
<div class="d r " style="right:186.0px;top:603px">-1</div>
<div class="d r " style="right:126.0px;top:603px">5 497,08</div>
<div class="d r " style="right:8.0px;top:603px">-10 994,16</div>
<div class="rl" style="left:2px;top:618px;width:1036px"></div>
<div class="d c" style="left:2px;width:42px;top:612px">186</div>
<div class="d " style="left:45.2px;top:612px">ЭКСПЕДИТ S СТЕЛЛАЖ БЕЛ 149*149</div>
<div class="d " style="left:320px;top:612px">100% при вводе в эксплуатацию</div>
<div class="d " style="left:508px;top:612px">Принято к учету</div>
<div class="d r " style="right:383.6px;top:612px">84</div>
<div class="d r " style="right:332.4px;top:612px">1,190</div>
<div style="left:749px;top:614px;width:2px;height:1px;background:#262626"></div>
<div class="d r " style="right:238.8px;top:612px">5 497,08</div>
<div class="d r " style="right:186.0px;top:612px">1</div>
<div class="d r " style="right:126.0px;top:612px">0,00</div>
<div class="d r " style="right:8.0px;top:612px">5 497,08</div>
<div class="rl" style="left:2px;top:634px;width:1036px"></div>
<div class="d c" style="left:2px;width:42px;top:621px">187</div>
<div class="d " style="left:45.2px;top:621px">Стол письменный с подвесной тумбой, цв. орех<br>1200*700*750</div>
<div class="d " style="left:254px;top:621px">21010600676</div>
<div class="d " style="left:320px;top:621px">100% при вводе в эксплуатацию</div>
<div class="d " style="left:455px;top:621px">12.01.2011</div>
<div class="d " style="left:508px;top:621px">Введено в эксплуатацию</div>
<div class="d r " style="right:383.6px;top:621px">84</div>
<div class="d r " style="right:332.4px;top:621px">1,190</div>
<div class="d r red" style="right:294.0px;top:621px">-100,00</div>
<div class="d r " style="right:238.8px;top:621px">-3 750,00</div>
<div class="d r " style="right:186.0px;top:621px">-1</div>
<div class="d r " style="right:126.0px;top:621px">3 750,00</div>
<div class="d r " style="right:8.0px;top:621px">-7 500,00</div>
<div class="rl" style="left:2px;top:650px;width:1036px"></div>
<div class="d c" style="left:2px;width:42px;top:637px">188</div>
<div class="d " style="left:45.2px;top:637px">Стол письменный с подвесной тумбой, цв. орех<br>1200*700*750</div>
<div class="d " style="left:320px;top:637px">100% при вводе в эксплуатацию</div>
<div class="d " style="left:508px;top:637px">Принято к учету</div>
<div class="d r " style="right:383.6px;top:637px">84</div>
<div class="d r " style="right:332.4px;top:637px">1,190</div>
<div style="left:749px;top:639px;width:2px;height:1px;background:#262626"></div>
<div class="d r " style="right:238.8px;top:637px">3 750,00</div>
<div class="d r " style="right:186.0px;top:637px">1</div>
<div class="d r " style="right:126.0px;top:637px">0,00</div>
<div class="d r " style="right:8.0px;top:637px">3 750,00</div>
<div class="rl" style="left:2px;top:659px;width:1036px"></div>
<div class="d c" style="left:2px;width:42px;top:653px">189</div>
<div class="d " style="left:45.2px;top:653px">Стул для пианиста</div>
<div class="d " style="left:254px;top:653px">31010601011</div>
<div class="d " style="left:320px;top:653px">100% при вводе в эксплуатацию</div>
<div class="d " style="left:455px;top:653px">12.06.2007</div>
<div class="d " style="left:508px;top:653px">Введено в эксплуатацию</div>
<div class="d r " style="right:383.6px;top:653px">84</div>
<div class="d r " style="right:332.4px;top:653px">1,190</div>
<div class="d r red" style="right:294.0px;top:653px">-100,00</div>
<div class="d r " style="right:238.8px;top:653px">-4 156,00</div>
<div class="d r " style="right:186.0px;top:653px">-1</div>
<div class="d r " style="right:126.0px;top:653px">4 156,00</div>
<div class="d r " style="right:8.0px;top:653px">-8 312,00</div>
<div class="rl" style="left:2px;top:668px;width:1036px"></div>
<div class="d c" style="left:2px;width:42px;top:662px">190</div>
<div class="d " style="left:45.2px;top:662px">Стул для пианиста</div>
<div class="d " style="left:320px;top:662px">100% при вводе в эксплуатацию</div>
<div class="d " style="left:508px;top:662px">Принято к учету</div>
<div class="d r " style="right:383.6px;top:662px">84</div>
<div class="d r " style="right:332.4px;top:662px">1,190</div>
<div style="left:749px;top:664px;width:2px;height:1px;background:#262626"></div>
<div class="d r " style="right:238.8px;top:662px">4 156,00</div>
<div class="d r " style="right:186.0px;top:662px">1</div>
<div class="d r " style="right:126.0px;top:662px">0,00</div>
<div class="d r " style="right:8.0px;top:662px">4 156,00</div>
<div class="rl" style="left:2px;top:677px;width:1036px"></div>
<div class="d c" style="left:2px;width:42px;top:671px">191</div>
<div class="d " style="left:45.2px;top:671px">Стул для пианиста</div>
<div class="d " style="left:254px;top:671px">31010601012</div>
<div class="d " style="left:320px;top:671px">100% при вводе в эксплуатацию</div>
<div class="d " style="left:455px;top:671px">12.06.2007</div>
<div class="d " style="left:508px;top:671px">Введено в эксплуатацию</div>
<div class="d r " style="right:383.6px;top:671px">84</div>
<div class="d r " style="right:332.4px;top:671px">1,190</div>
<div class="d r red" style="right:294.0px;top:671px">-100,00</div>
<div class="d r " style="right:238.8px;top:671px">-4 156,00</div>
<div class="d r " style="right:186.0px;top:671px">-1</div>
<div class="d r " style="right:126.0px;top:671px">4 156,00</div>
<div class="d r " style="right:8.0px;top:671px">-8 312,00</div>
<div class="rl" style="left:2px;top:686px;width:1036px"></div>
<div class="d c" style="left:2px;width:42px;top:680px">192</div>
<div class="d " style="left:45.2px;top:680px">Стул для пианиста</div>
<div class="d " style="left:320px;top:680px">100% при вводе в эксплуатацию</div>
<div class="d " style="left:508px;top:680px">Принято к учету</div>
<div class="d r " style="right:383.6px;top:680px">84</div>
<div class="d r " style="right:332.4px;top:680px">1,190</div>
<div style="left:749px;top:682px;width:2px;height:1px;background:#262626"></div>
<div class="d r " style="right:238.8px;top:680px">4 156,00</div>
<div class="d r " style="right:186.0px;top:680px">1</div>
<div class="d r " style="right:126.0px;top:680px">0,00</div>
<div class="d r " style="right:8.0px;top:680px">4 156,00</div>
<div class="rv" style="left:44px;top:133px;height:553px"></div>
<div class="rv" style="left:252px;top:133px;height:553px"></div>
<div class="rv" style="left:318px;top:133px;height:553px"></div>
<div class="rv" style="left:453px;top:133px;height:553px"></div>
<div class="rv" style="left:506px;top:133px;height:553px"></div>
<div class="rv" style="left:610px;top:133px;height:553px"></div>
<div class="rv" style="left:662px;top:133px;height:553px"></div>
<div class="rv" style="left:713px;top:133px;height:553px"></div>
<div class="rv" style="left:752px;top:133px;height:553px"></div>
<div class="rv" style="left:807px;top:133px;height:553px"></div>
<div class="rv" style="left:860px;top:133px;height:553px"></div>
<div class="rv" style="left:920px;top:133px;height:553px"></div>
<div class="rv" style="left:984px;top:133px;height:553px"></div>
<div class="rv" style="left:1038px;top:133px;height:553px"></div>
<div class="vl" style="left:2px;top:0;height:689px;background:#8c8c8c"></div>
<div class="rv" style="left:1038px;top:132px;height:557px"></div>
<div class="rl" style="left:0;top:686px;width:1038px"></div>
<div style="left:503px;top:363px;width:107px;height:12px;border:2px solid #e6c64c;"><div style="left:0;top:0;width:105px;height:10px;border:1px solid #f5df88"></div></div>
</body></html>
